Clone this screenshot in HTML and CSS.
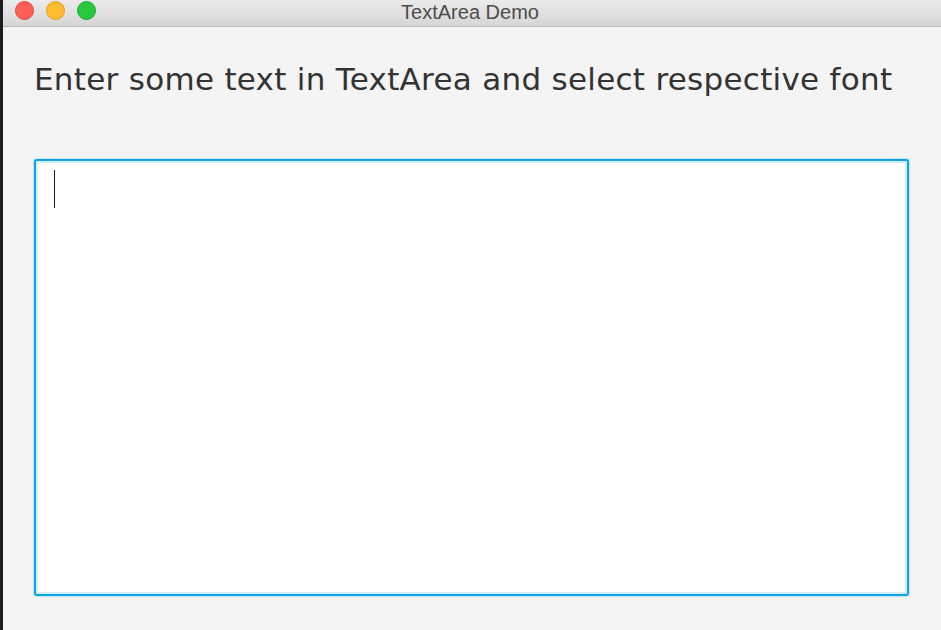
FILE: index.html
```html
<!DOCTYPE html>
<html>
<head>
<meta charset="utf-8">
<link rel="stylesheet" href="styles.css">
<title>TextArea Demo</title>
</head>
<body>
<div class="edge"></div>
<div class="window">
  <div class="titlebar">
    <div class="lights">
      <span class="light red"></span>
      <span class="light yellow"></span>
      <span class="light green"></span>
    </div>
    <div class="title">TextArea Demo</div>
  </div>
  <div class="content">
    <h1 class="prompt">Enter some text in TextArea and select respective font</h1>
    <div class="area"><span class="caret"></span></div>
  </div>
</div>
</body>
</html>
```
FILE: styles.css
```css
html, body {
  margin: 0;
  padding: 0;
  width: 941px;
  height: 630px;
  overflow: hidden;
  background: #f4f4f4;
  display: flex;
}
.edge {
  width: 3px;
  height: 630px;
  background: #1e1e1e;
  flex: none;
}
.window {
  flex: 1;
  display: flex;
  flex-direction: column;
  background: #f4f4f4;
}
.titlebar {
  height: 26px;
  position: relative;
  background: linear-gradient(#ebebeb, #d6d6d6);
  border-bottom: 1px solid #b9b9b9;
  display: flex;
  align-items: center;
  justify-content: center;
  flex: none;
}
.lights {
  position: absolute;
  left: 12px;
  top: 1px;
  display: flex;
  gap: 12px;
}
.light {
  width: 19px;
  height: 19px;
  border-radius: 50%;
  box-sizing: border-box;
}
.red { background: #fd5f57; border: 1px solid #e2463f; }
.yellow { background: #febc2e; border: 1px solid #e1a116; }
.green { background: #28c840; border: 1px solid #14ae2a; }
.title {
  font-family: "Liberation Sans", Arial, sans-serif;
  font-size: 20px;
  color: #4d4d4d;
  margin-left: -4px;
  margin-top: -2px;
}
.content {
  padding: 0 0 0 31px;
}
.prompt {
  margin: 34px 0 0 0;
  font-family: "DejaVu Sans", Verdana, sans-serif;
  font-weight: normal;
  font-size: 31px;
  line-height: 36px;
  color: #333333;
  letter-spacing: 0.28px;
  white-space: nowrap;
}
.area {
  margin-top: 62px;
  width: 875px;
  height: 437px;
  box-sizing: border-box;
  background: #ffffff;
  border: 2px solid #12a3e2;
  border-radius: 3px;
  box-shadow: 0 0 0 1px #bde6f6, inset 0 0 0 2px #d2effa;
  padding: 9px 0 0 18px;
}
.caret {
  display: block;
  width: 1px;
  height: 38px;
  background: #1a1a1a;
}
```
